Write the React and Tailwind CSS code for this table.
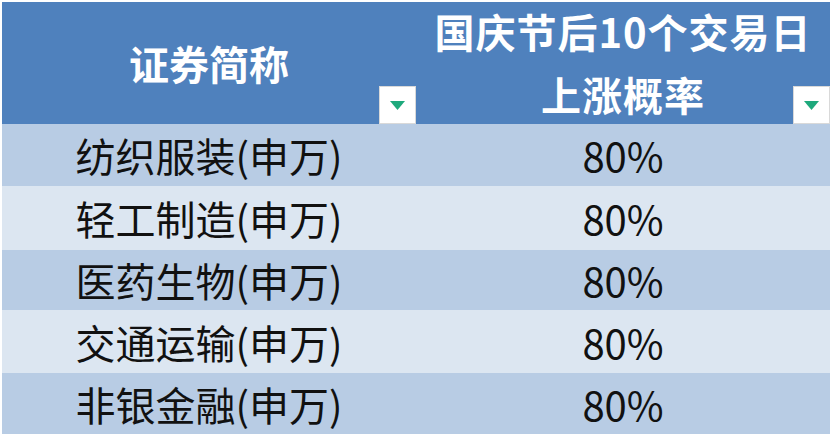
import React from "react";

const rows = [
  { name: "纺织服装(申万)", v: "80%", h: "h-[62px]", bg: "bg-[#b8cce4]" },
  { name: "轻工制造(申万)", v: "80%", h: "h-[64px]", bg: "bg-[#dce6f1]" },
  { name: "医药生物(申万)", v: "80%", h: "h-[60px]", bg: "bg-[#b8cce4]" },
  { name: "交通运输(申万)", v: "80%", h: "h-[63px]", bg: "bg-[#dce6f1]" },
  { name: "非银金融(申万)", v: "80%", h: "h-[61px]", bg: "bg-[#b8cce4]" },
];

function Drop() {
  return (
    <div className="absolute right-0 bottom-0 w-[37px] h-[38px] bg-white border border-[#d9d9d9] flex items-center justify-center">
      <svg width="15" height="9" viewBox="0 0 15 9">
        <polygon points="0,0 15,0 7.5,9" fill="#1ea97c" />
      </svg>
    </div>
  );
}

export default function App() {
  return (
    <div
      className="w-[832px] h-[434px] bg-white pt-[2px] pl-[2px] pr-[2px] overflow-hidden"
      style={{ fontFamily: '"Noto Sans CJK SC", "Noto Sans", sans-serif' }}
    >
      <div className="flex h-[122px] bg-[#4f81bd] text-white font-bold text-[40px]">
        <div className="relative w-[414px] flex items-center justify-center">
          <span className="leading-none">证券简称</span>
          <Drop />
        </div>
        <div className="relative flex-1 flex flex-col items-center justify-center">
          <div className="leading-[63px] tracking-[1px] text-center">
            <div>国庆节后10个交易日</div>
            <div>上涨概率</div>
          </div>
          <Drop />
        </div>
      </div>
      {rows.map((r, i) => (
        <div key={i} className={`flex ${r.h} ${r.bg} text-[40px] text-[#111111]`}>
          <div className="w-[414px] flex items-center justify-center leading-none">{r.name}</div>
          <div className="flex-1 flex items-center justify-center leading-none">{r.v}</div>
        </div>
      ))}
    </div>
  );
}
